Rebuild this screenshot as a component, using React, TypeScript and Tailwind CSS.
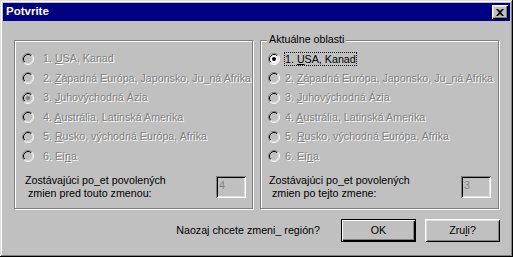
import React from 'react';

type Option = { pre: string; key: string; post: string };

const options: Option[] = [
  { pre: '1. ', key: 'U', post: 'SA, Kanad' },
  { pre: '2. ', key: 'Z', post: 'ápadná Európa, Japonsko, Ju_ná Afrika' },
  { pre: '3. ', key: 'J', post: 'uhovýchodná Ázia' },
  { pre: '4. ', key: 'A', post: 'ustrália, Latinská Amerika' },
  { pre: '5. ', key: 'R', post: 'usko, východná Európa, Afrika' },
  { pre: '6. Eí', key: 'n', post: 'a' },
];

const disabledText = 'text-[#808080] [text-shadow:1px_1px_0_#fff]';

function RadioIcon({ checked, disabled }: { checked?: boolean; disabled?: boolean }) {
  return (
    <svg width="12" height="12" viewBox="0 0 12 12" className="shrink-0">
      <circle cx="6" cy="6" r="5" fill={disabled ? '#c0c0c0' : '#fff'} />
      <path d="M2.11 9.89A5.5 5.5 0 0 1 9.89 2.11" stroke="#808080" fill="none" />
      <path d="M9.89 2.11A5.5 5.5 0 0 1 2.11 9.89" stroke="#fff" fill="none" />
      <path d="M2.82 9.18A4.5 4.5 0 0 1 9.18 2.82" stroke="#000" fill="none" />
      <path d="M9.18 2.82A4.5 4.5 0 0 1 2.82 9.18" stroke="#dfdfdf" fill="none" />
      {checked && <circle cx="6" cy="6" r="2" fill={disabled ? '#808080' : '#000'} />}
    </svg>
  );
}

function GroupBox({
  legend,
  selected,
  enabledIndex,
  count,
  line2,
  radioPad,
  textGap,
  labelPad,
  boxMargin,
}: {
  legend?: string;
  selected: number;
  enabledIndex: number;
  count: string;
  line2: string;
  radioPad: string;
  textGap: string;
  labelPad: string;
  boxMargin: string;
}) {
  return (
    <div className="relative w-[239px] h-[169px] border border-[#808080] shadow-[1px_1px_0_#fff,inset_1px_1px_0_#fff] pt-[8px]">
      {legend && (
        <span className="absolute -top-[8px] left-[6px] px-[2px] bg-[#c0c0c0] leading-[13px]">{legend}</span>
      )}
      {options.map((o, i) => {
        const enabled = i === enabledIndex;
        return (
          <div key={i} className={`flex items-center h-[19.5px] ${radioPad} ${textGap}`}>
            <RadioIcon checked={i === selected} disabled={!enabled} />
            {enabled ? (
              <span className="w-[73px] h-[14px] overflow-hidden whitespace-nowrap border border-dotted border-black leading-[12px] -ml-[1px]">
                {o.pre}
                <u>{o.key}</u>
                {o.post}
              </span>
            ) : (
              <span className={`whitespace-nowrap leading-[13px] ${disabledText}`}>
                {o.pre}
                <u>{o.key}</u>
                {o.post}
              </span>
            )}
          </div>
        );
      })}
      <div className={`flex items-start mt-[8px] ${labelPad} ${boxMargin}`}>
        <div className="flex-1 leading-[13px] whitespace-pre">
          {'Zostávajúci po_et povolených\n ' + line2}
        </div>
        <div className="mt-[2px] w-[30px] h-[22px] pl-[3px] pt-[3px] leading-[13px] shadow-[inset_1px_1px_0_#808080,inset_-1px_-1px_0_#fff,inset_2px_2px_0_#000,inset_-2px_-2px_0_#dfdfdf] text-[#808080]">
          {count}
        </div>
      </div>
    </div>
  );
}

function Button({ children, isDefault }: { children: React.ReactNode; isDefault?: boolean }) {
  return (
    <button
      className={`w-[75px] h-[23px] flex items-center justify-center bg-[#c0c0c0] ${
        isDefault
          ? 'border border-black shadow-[inset_1px_1px_0_#fff,inset_-1px_-1px_0_#000,inset_-2px_-2px_0_#808080]'
          : 'shadow-[inset_1px_1px_0_#fff,inset_-1px_-1px_0_#000,inset_2px_2px_0_#dfdfdf,inset_-2px_-2px_0_#808080]'
      }`}
    >
      {children}
    </button>
  );
}

export default function App() {
  return (
    <div className="w-[513px] h-[257px] bg-[#c0c0c0] p-[3px] flex flex-col text-[10.7px] text-black font-['Liberation_Sans',Arial,sans-serif] shadow-[inset_-1px_-1px_0_#000,inset_1px_1px_0_#dfdfdf,inset_-2px_-2px_0_#808080,inset_2px_2px_0_#fff]">
      <div className="h-[18px] bg-[#000080] flex items-center justify-between pl-[3px] pr-[2px]">
        <span className="text-white font-bold text-[11.5px]">Potvrite</span>
        <div className="w-[16px] h-[14px] bg-[#c0c0c0] flex items-center justify-center shadow-[inset_1px_1px_0_#fff,inset_-1px_-1px_0_#000,inset_-2px_-2px_0_#808080,inset_2px_2px_0_#dfdfdf]">
          <svg width="8" height="7" viewBox="0 0 8 7">
            <path d="M0 0h2l2 2 2-2h2L5 3.5 8 7H6L4 5 2 7H0l3-3.5z" fill="#000" />
          </svg>
        </div>
      </div>

      <div className="flex pl-[11px] pt-[19px] gap-[7px]">
        <GroupBox
          selected={2}
          enabledIndex={-1}
          count="4"
          line2="zmien pred touto zmenou:"
          radioPad="pl-[7px]"
          textGap="gap-[9px]"
          labelPad="pl-[10px]"
          boxMargin="pr-[6px]"
        />
        <GroupBox
          legend="Aktuálne oblasti"
          selected={0}
          enabledIndex={0}
          count="3"
          line2="zmien po tejto zmene:"
          radioPad="pl-[7px]"
          textGap="gap-[5px]"
          labelPad="pl-[8px]"
          boxMargin="pr-[7px]"
        />
      </div>

      <div className="flex items-center justify-end mt-[10px] pr-[10px]">
        <span className="mr-[21px]">Naozaj chcete zmeni_ región?</span>
        <Button isDefault>OK</Button>
        <div className="w-[9px]" />
        <Button>
          Zru<u>l</u>i?
        </Button>
      </div>
    </div>
  );
}
